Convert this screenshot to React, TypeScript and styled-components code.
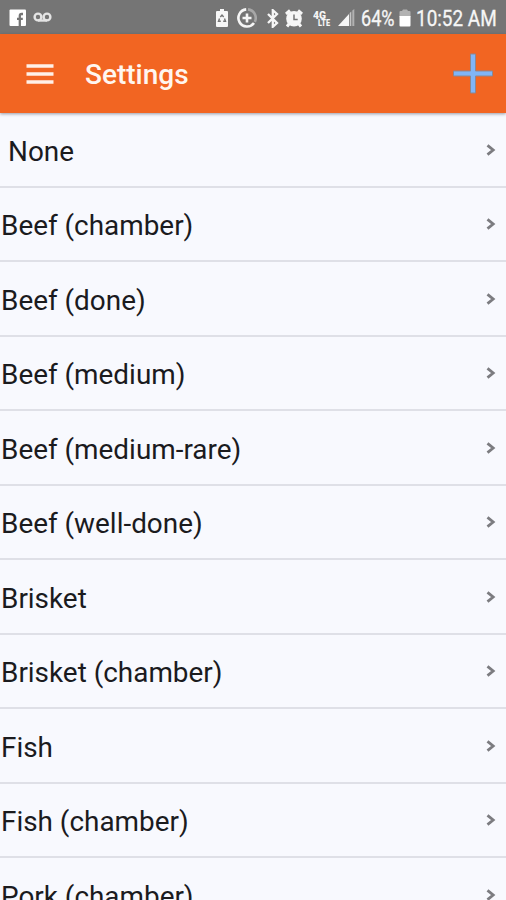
import React from 'react';
import styled, { createGlobalStyle } from 'styled-components';

const GlobalStyle = createGlobalStyle`
  * { box-sizing: border-box; }
  body { margin: 0; background: #f8f9fe; overflow: hidden; font-family: Roboto, sans-serif; }
`;

const Screen = styled.main`
  display: flex;
  flex-direction: column;
  width: 506px;
  height: 900px;
  overflow: hidden;
  background: #f8f9fe;
`;

const StatusBar = styled.header`
  display: flex;
  flex: none;
  align-items: center;
  height: 34px;
  padding: 2px 9px 0 8px;
  background: #757575;
  color: #f6f6f6;
`;

const StatusIcon = styled.svg<{ $gap?: number }>`
  display: block;
  flex: none;
  margin-left: ${({ $gap = 0 }) => $gap}px;
`;

const Spacer = styled.div`
  flex: 1;
`;

const StatusText = styled.span<{ $width: number; $gap: number; $scale: number }>`
  flex: none;
  width: ${({ $width }) => $width}px;
  margin: 1px 0 0 ${({ $gap }) => $gap}px;
  font-size: 21.5px;
  -webkit-text-stroke: 0.3px #f6f6f6;
  line-height: 30px;
  white-space: nowrap;
  transform: scaleX(${({ $scale }) => $scale});
  transform-origin: left center;
`;

const AppBar = styled.nav`
  display: flex;
  flex: none;
  align-items: center;
  height: 79px;
  padding: 0 13px 0 26px;
  background: #f26522;
  box-shadow: 0 1px 3px rgba(60, 60, 80, 0.5);
  z-index: 1;
`;

const IconButton = styled.button`
  display: flex;
  padding: 0;
  border: 0;
  background: none;
`;

const Title = styled.h1`
  flex: 1;
  margin: 3px 0 0 31px;
  color: #fff6f0;
  font-size: 28px;
  font-weight: 500;
  line-height: 34px;
`;

const List = styled.ul`
  flex: none;
  margin: 0;
  padding: 0;
  list-style: none;
`;

const Row = styled.li<{ $inset?: boolean }>`
  display: flex;
  align-items: center;
  justify-content: space-between;
  height: 74.5px;
  padding: 4.5px 10.5px 0 ${({ $inset }) => ($inset ? 8 : 1)}px;
  border-bottom: 2px solid #dfe0e7;
  color: #1b1b1e;
`;

const Label = styled.span`
  font-size: 27.9px;
  line-height: 36px;
  white-space: nowrap;
`;

const Chevron = styled.svg`
  display: block;
  margin-top: -4px;
`;

const items = [
  'None',
  'Beef (chamber)',
  'Beef (done)',
  'Beef (medium)',
  'Beef (medium-rare)',
  'Beef (well-done)',
  'Brisket',
  'Brisket (chamber)',
  'Fish',
  'Fish (chamber)',
  'Pork (chamber)',
];

const FacebookIcon = () => (
  <StatusIcon width="18" height="18" viewBox="0 0 18 18" $gap={1}>
    <rect x="0.5" y="0.5" width="16.5" height="16.5" rx="1" fill="#fff" />
    <path d="M14 5h-1.4q-1.8 0-1.8 1.8V17M8 9.8h5.8" fill="none" stroke="#757575" strokeWidth="2.3" />
  </StatusIcon>
);

const VoicemailIcon = () => (
  <StatusIcon width="19" height="12" viewBox="0 0 19 12" $gap={6}>
    <g fill="none" stroke="#e4e4e4" strokeWidth="2.4">
      <circle cx="5" cy="5" r="3.4" />
      <circle cx="14" cy="5" r="3.4" />
      <path d="M5 8.5h9" />
    </g>
  </StatusIcon>
);

const BatterySaverIcon = () => (
  <StatusIcon width="12" height="18" viewBox="0 0 12 18">
    <path d="M4 0h4v2h3a1 1 0 0 1 1 1v14a1 1 0 0 1-1 1H1a1 1 0 0 1-1-1V3a1 1 0 0 1 1-1h3z" fill="#f6f6f6" />
    <path d="M4.3 8l1.7-2L7.7 8M3.5 9.5l-1 2.8h2.3M8.5 9.5l1 2.8H7.2" fill="none" stroke="#757575" strokeWidth="1.4" />
  </StatusIcon>
);

const DataSaverIcon = () => (
  <StatusIcon width="20" height="20" viewBox="0 0 20 20" $gap={9}>
    <g fill="none" strokeWidth="2.6">
      <path d="M11 1.4A8.6 8.6 0 0 1 17.8 13.8" stroke="#a7a7a7" />
      <path d="M9.2 1.4A8.6 8.6 0 1 0 17 15" stroke="#f6f6f6" />
      <path d="M10 5.5v9M5.5 10h9" stroke="#f6f6f6" />
    </g>
  </StatusIcon>
);

const BluetoothIcon = () => (
  <StatusIcon width="12" height="19" viewBox="0 0 12 19" $gap={10}>
    <path d="M1 5l9 9-4.2 3.8V1.2L10 5l-9 9" fill="none" stroke="#f6f6f6" strokeWidth="2.3" />
  </StatusIcon>
);

const AlarmIcon = () => (
  <StatusIcon width="18" height="19" viewBox="0 0 18 19" $gap={6}>
    <circle cx="9" cy="9.8" r="7.8" fill="#f6f6f6" />
    <path d="M1 5l4-3.5M17 5l-4-3.5M4 15l-2 2.5M14 15l2 2.5" stroke="#f6f6f6" strokeWidth="3" />
    <path d="M9 5.5v5h3.7" fill="none" stroke="#757575" strokeWidth="1.5" />
  </StatusIcon>
);

const NetworkIcon = () => (
  <StatusIcon width="18" height="18" viewBox="0 0 18 18" $gap={10}>
    <g fill="#f6f6f6" fontFamily="Roboto, sans-serif" fontWeight="900">
      <text x="0" y="9.5" fontSize="10.5" textLength="13" lengthAdjust="spacingAndGlyphs">4G</text>
      <text x="5" y="17" fontSize="8.5" textLength="12" lengthAdjust="spacingAndGlyphs">LTE</text>
    </g>
  </StatusIcon>
);

const SignalIcon = () => (
  <StatusIcon width="17" height="18" viewBox="0 0 17 18" $gap={7}>
    <path d="M0 17L11 5v12z" fill="#f6f6f6" />
    <path d="M11.7 4l1.6-1.5V17h-1.6z" fill="#c5c5c5" />
    <path d="M14.3 1.5L16.3 0v17h-2z" fill="#b1b1b1" />
  </StatusIcon>
);

const BatteryIcon = () => (
  <StatusIcon width="12" height="18" viewBox="0 0 12 18" $gap={3}>
    <path d="M0.5 8V3q0-1 1-1H3L4 0.5h4L9 2h1.5q1 0 1 1v5z" fill="#b2b2b2" />
    <path d="M0.5 7h11v9.5q0 1-1 1h-9q-1 0-1-1z" fill="#fff" />
  </StatusIcon>
);

export default function App() {
  return (
    <>
      <GlobalStyle />
      <Screen>
        <StatusBar>
          <FacebookIcon />
          <VoicemailIcon />
          <Spacer />
          <BatterySaverIcon />
          <DataSaverIcon />
          <BluetoothIcon />
          <AlarmIcon />
          <NetworkIcon />
          <SignalIcon />
          <StatusText $width={35} $gap={6.5} $scale={0.84}>64%</StatusText>
          <BatteryIcon />
          <StatusText $width={81} $gap={5} $scale={0.88}>10:52 AM</StatusText>
        </StatusBar>
        <AppBar>
          <IconButton aria-label="Menu">
            <svg width="28" height="20" viewBox="0 0 28 20">
              <path d="M0.5 2h27M0.5 10h27M0.5 18h27" stroke="#fff0e8" strokeWidth="3.4" />
            </svg>
          </IconButton>
          <Title>Settings</Title>
          <IconButton aria-label="Add">
            <svg width="40" height="41" viewBox="0 0 40 41">
              <path d="M17.5 1h5v17h17v5h-17v17h-5V23H.5v-5h17z" fill="#80b5f6" stroke="#8b8791" strokeWidth="1" strokeLinejoin="round" />
            </svg>
          </IconButton>
        </AppBar>
        <List>
          {items.map((item, index) => (
            <Row key={item} $inset={index === 0}>
              <Label>{item}</Label>
              <Chevron width="10" height="12" viewBox="0 0 10 12">
                <path d="M1.5 1.3L7.2 6L1.5 10.7" fill="none" stroke="#7c7c80" strokeWidth="2.8" />
              </Chevron>
            </Row>
          ))}
        </List>
      </Screen>
    </>
  );
}
